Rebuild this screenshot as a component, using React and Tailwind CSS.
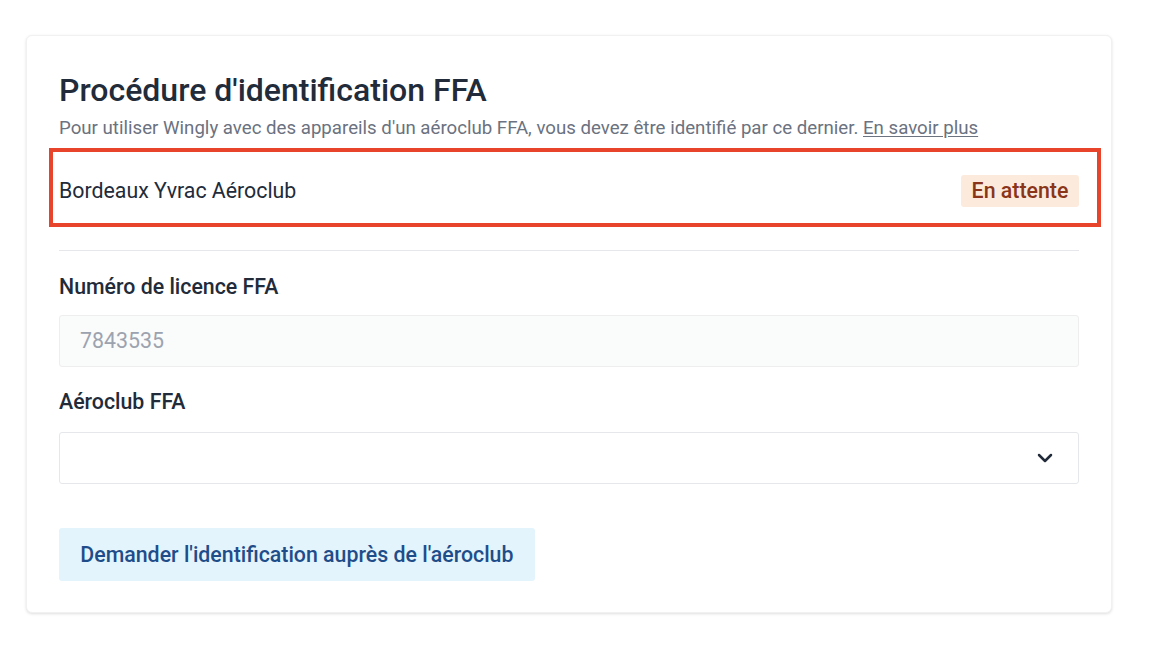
import React from "react";
import { ChevronDown } from "lucide-react";

export default function App() {
  return (
    <div className="min-h-[650px] w-[1172px] bg-white pt-[35px] pl-[26px]" style={{ fontFamily: "Roboto, 'Noto Sans', sans-serif" }}>
      <div className="w-[1086px] rounded-md border border-[#f1f1f1] bg-white px-[32px] pt-[34px] pb-[31px] shadow-[0_1px_3px_rgba(0,0,0,0.13)]">
        <h1 className="text-[32px] leading-[40px] font-medium text-[#222b3a]">Procédure d'identification FFA</h1>
        <p className="mt-[6px] text-[18.67px] leading-[24px] text-[#6b7280]">
          Pour utiliser Wingly avec des appareils d'un aéroclub FFA, vous devez être identifié par ce dernier.{" "}
          <a className="underline underline-offset-2">En savoir plus</a>
        </p>
        <div className="mt-[8px] ml-[-10px] mr-[-22px] flex items-center justify-between border-[4px] border-[#e8432b] pl-[6px] pr-[18px] pt-[23px] pb-[16px]">
          <span className="text-[21.33px] leading-[28px] text-[#222b3a]">Bordeaux Yvrac Aéroclub</span>
          <span className="flex h-[32px] items-center rounded-[3px] bg-[#fcebdc] px-[10.67px] text-[21.33px] font-medium text-[#8a3519]">En attente</span>
        </div>
        <div className="mt-[23px] h-px bg-[#e5e7eb]" />
        <label className="mt-[22px] block text-[21.33px] leading-[28px] font-medium text-[#222b3a]">Numéro de licence FFA</label>
        <div className="mt-[14px] flex h-[52px] items-center rounded-[3px] border border-[#eeeeee] bg-[#fafbfb] px-[20px] text-[21.33px] text-[#9ca3af]">7843535</div>
        <label className="mt-[21px] block text-[21.33px] leading-[28px] font-medium text-[#222b3a]">Aéroclub FFA</label>
        <div className="mt-[16px] flex h-[52px] items-center justify-end rounded-[3px] border border-[#e5e7eb] bg-white pr-[21px]">
          <ChevronDown size={24} strokeWidth={2.5} className="text-[#222b3a]" />
        </div>
        <button className="mt-[44px] flex h-[53px] items-center justify-center rounded-[3px] bg-[#e3f4fc] px-[21.33px] text-[21.33px] font-medium text-[#1f4d8a]">
          Demander l'identification auprès de l'aéroclub
        </button>
      </div>
    </div>
  );
}
